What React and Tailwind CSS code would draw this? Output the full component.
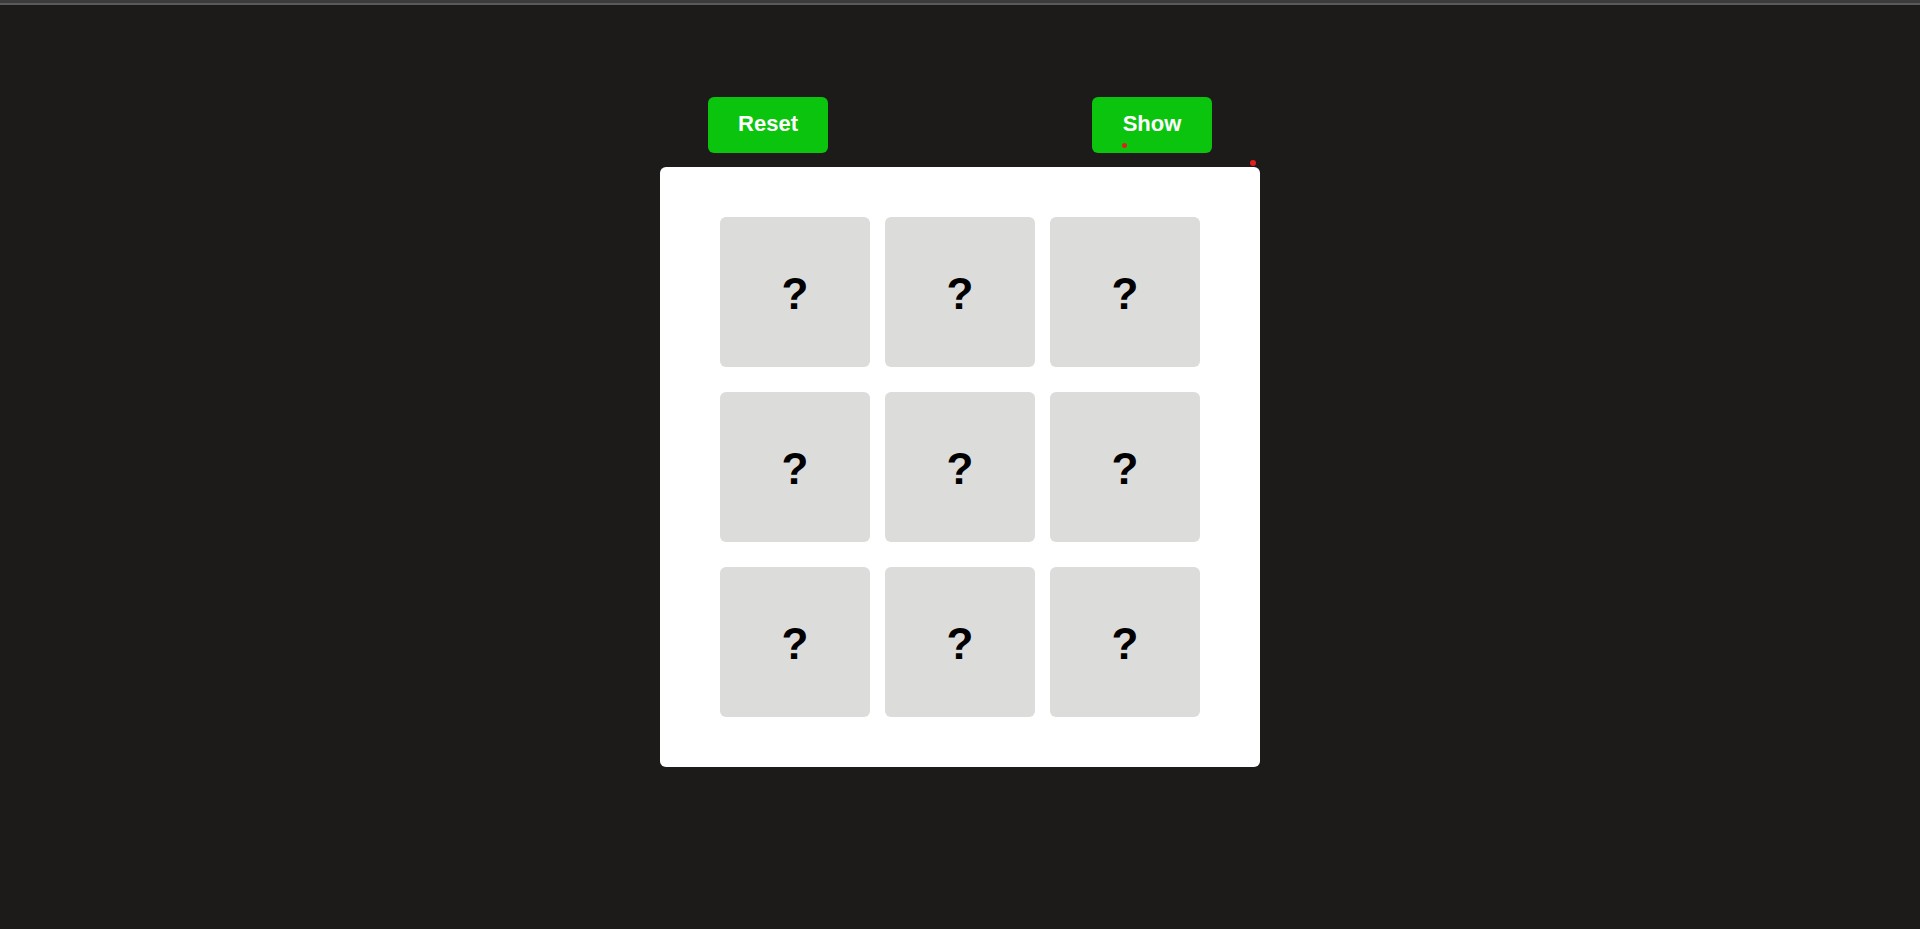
export default function App() {
  const cards = Array.from({ length: 9 });
  return (
    <div className="min-h-[929px] w-full bg-[#1c1b1a] font-['Liberation_Sans',Arial,sans-serif]">
      <div className="h-[3px] bg-[#3b3b3b]" />
      <div className="h-[2px] bg-[#5a5a5a]" />
      <div className="flex flex-col items-center pt-[92px]">
        <div className="flex w-[600px] justify-between px-[48px]">
          <button className="flex h-[56px] w-[120px] items-center justify-center rounded-[6px] bg-[#0ac40e] pb-[3px] text-[22px] font-bold text-white">
            Reset
          </button>
          <button className="relative flex h-[56px] w-[120px] items-center justify-center rounded-[6px] bg-[#0ac40e] pb-[3px] text-[22px] font-bold text-white">
            Show
            <span className="absolute left-[30px] top-[46px] h-[5px] w-[5px] rounded-full bg-[#e0201f]" />
          </button>
        </div>
        <div className="relative mt-[14px] h-[600px] w-[600px] rounded-[6px] bg-white px-[60px] py-[50px]">
          <span className="absolute right-[4px] top-[-7px] h-[6px] w-[6px] rounded-full bg-[#e0201f]" />
          <div className="grid grid-cols-[150px_150px_150px] grid-rows-[150px_150px_150px] gap-x-[15px] gap-y-[25px]">
            {cards.map((_, i) => (
              <div
                key={i}
                className="flex items-center justify-center rounded-[6px] bg-[#dcdddb] pt-[4px] text-[44px] font-bold leading-none text-black"
              >
                ?
              </div>
            ))}
          </div>
        </div>
      </div>
    </div>
  );
}
